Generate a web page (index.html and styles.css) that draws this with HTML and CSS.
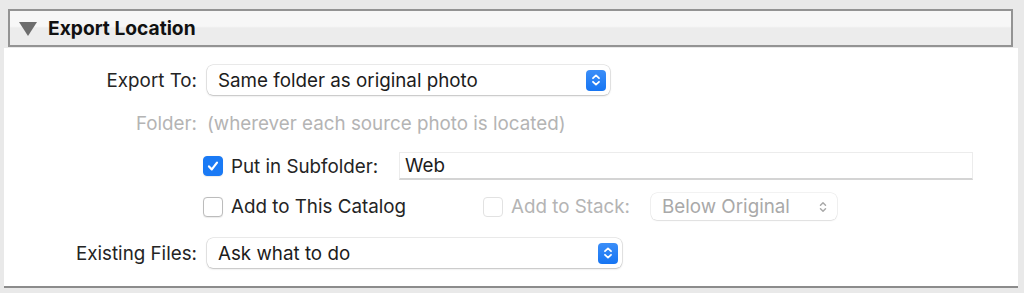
FILE: index.html
```html
<!DOCTYPE html>
<html lang="en">
<head>
    <meta charset="UTF-8">
    <title>Export Location</title>
    <link rel="stylesheet" href="styles.css">
</head>
<body>
    <div class="panel">
        <div class="panel-head">
            <div class="head-bar">
                <svg class="disclosure" width="18" height="14" viewBox="0 0 18 14">
                    <polygon points="0,0 18,0 9,14" fill="#6d6d6d"/>
                </svg>
                <span class="head-title">Export Location</span>
            </div>
        </div>

        <div class="panel-body">
            <div class="form-row row-export">
                <div class="label">Export To:</div>
                <div class="popup popup-export">
                    <span>Same folder as original photo</span>
                    <span class="stepper">
                        <svg width="10" height="14" viewBox="0 0 10 14">
                            <path d="M2 5.2 L5 2.4 L8 5.2 M2 8.8 L5 11.6 L8 8.8" fill="none" stroke="#fff" stroke-width="1.8" stroke-linecap="round" stroke-linejoin="round"/>
                        </svg>
                    </span>
                </div>
            </div>

            <div class="form-row row-folder">
                <div class="label dim">Folder:</div>
                <div class="dim">(wherever each source photo is located)</div>
            </div>

            <div class="form-row row-sub">
                <div class="label"></div>
                <div class="inline-group">
                    <label class="check-group check-sub">
                        <span class="checkbox checked">
                            <svg width="14" height="14" viewBox="0 0 14 14">
                                <path d="M3 7.4 L5.8 10.4 L11 3.6" fill="none" stroke="#fff" stroke-width="2.2" stroke-linecap="round" stroke-linejoin="round"/>
                            </svg>
                        </span>
                        <span>Put in Subfolder:</span>
                    </label>
                    <div class="text-field">Web</div>
                </div>
            </div>

            <div class="form-row row-catalog">
                <div class="label"></div>
                <div class="inline-group">
                    <label class="check-group check-catalog">
                        <span class="checkbox"></span>
                        <span>Add to This Catalog</span>
                    </label>
                    <label class="check-group check-stack dim">
                        <span class="checkbox disabled"></span>
                        <span>Add to Stack:</span>
                    </label>
                    <div class="popup popup-stack">
                        <span>Below Original</span>
                        <svg class="plain-step" width="10" height="14" viewBox="0 0 10 14">
                            <path d="M2.5 5.2 L5 2.8 L7.5 5.2 M2.5 8.8 L5 11.2 L7.5 8.8" fill="none" stroke="#a9a9a9" stroke-width="1.5" stroke-linecap="round" stroke-linejoin="round"/>
                        </svg>
                    </div>
                </div>
            </div>

            <div class="form-row row-existing">
                <div class="label">Existing Files:</div>
                <div class="popup popup-existing">
                    <span>Ask what to do</span>
                    <span class="stepper">
                        <svg width="10" height="14" viewBox="0 0 10 14">
                            <path d="M2 5.2 L5 2.4 L8 5.2 M2 8.8 L5 11.6 L8 8.8" fill="none" stroke="#fff" stroke-width="1.8" stroke-linecap="round" stroke-linejoin="round"/>
                        </svg>
                    </span>
                </div>
            </div>
        </div>
    </div>
</body>
</html>
```

FILE: styles.css
```css
* {
    margin: 0;
    padding: 0;
    box-sizing: border-box;
}

body {
    font-family: Inter, "Liberation Sans", sans-serif;
    font-size: 18.8px;
    color: #242424;
    background: #e9e9e9;
    width: 1024px;
    height: 293px;
    overflow: hidden;
}

.panel {
    display: flex;
    flex-direction: column;
}

.panel-head {
    padding: 9px 11px 0 8px;
}

.head-bar {
    height: 38px;
    border: 2px solid #939393;
    background: linear-gradient(#f7f7f7 0%, #f7f7f7 45%, #ececec 50%, #ececec 100%);
    display: flex;
    align-items: center;
    padding-left: 9px;
}

.disclosure {
    margin-right: 11px;
    margin-top: 1px;
}

.head-title {
    font-weight: 700;
    font-size: 19.2px;
    color: #111;
}

.panel-body {
    margin: 1px 6px 0 4px;
    background: #fff;
    height: 240px;
    border-bottom: 2px solid #8c8c8c;
    padding-top: 17px;
}

.form-row {
    display: flex;
    align-items: center;
}

.label {
    width: 193px;
    text-align: right;
    margin-right: 10px;
    flex-shrink: 0;
}

.dim {
    color: #b4b4b4;
}

.row-export {
    height: 30px;
}

.row-folder {
    height: 20px;
    margin-top: 18px;
}

.row-sub {
    height: 28px;
    margin-top: 19px;
}

.row-catalog {
    height: 27px;
    margin-top: 13px;
}

.row-existing {
    height: 30px;
    margin-top: 18px;
}

.popup {
    height: 100%;
    background: #fff;
    border-radius: 6px;
    box-shadow: 0 0 0 0.5px rgba(0, 0, 0, 0.16), 0 1px 2px rgba(0, 0, 0, 0.18);
    display: flex;
    align-items: center;
    justify-content: space-between;
    padding: 0 4px 0 11px;
    color: #1c1c1c;
}

.popup-export {
    width: 403px;
}

.popup-existing {
    width: 415px;
}

.stepper {
    width: 20px;
    height: 21px;
    border-radius: 4px;
    background: linear-gradient(#3b8ef8, #1675f3);
    display: flex;
    align-items: center;
    justify-content: center;
}

.inline-group {
    display: flex;
    align-items: center;
    height: 100%;
    margin-left: -4px;
}

.check-group {
    display: flex;
    align-items: center;
    gap: 8px;
    flex-shrink: 0;
}

.check-sub {
    width: 196px;
}

.check-catalog {
    width: 280px;
}

.check-stack {
    width: 168px;
}

.checkbox {
    width: 20px;
    height: 20px;
    border-radius: 4px;
    background: #fff;
    border: 1px solid #bcbcbc;
    box-shadow: 0 0.5px 1px rgba(0, 0, 0, 0.08);
    display: flex;
    align-items: center;
    justify-content: center;
    flex-shrink: 0;
}

.checkbox.checked {
    background: #1a7af5;
    border-color: #1a7af5;
}

.checkbox.disabled {
    border-color: #e2e2e2;
    box-shadow: none;
}

.text-field {
    width: 574px;
    height: 100%;
    border: 1px solid #ececec;
    border-bottom: 2px solid #d4d4d4;
    display: flex;
    align-items: center;
    padding-left: 5px;
    color: #1c1c1c;
}

.popup-stack {
    width: 186px;
    color: #a9a9a9;
    padding: 0 9px 0 11px;
    box-shadow: 0 0 0 0.5px rgba(0, 0, 0, 0.1), 0 1px 1.5px rgba(0, 0, 0, 0.08);
}
```
